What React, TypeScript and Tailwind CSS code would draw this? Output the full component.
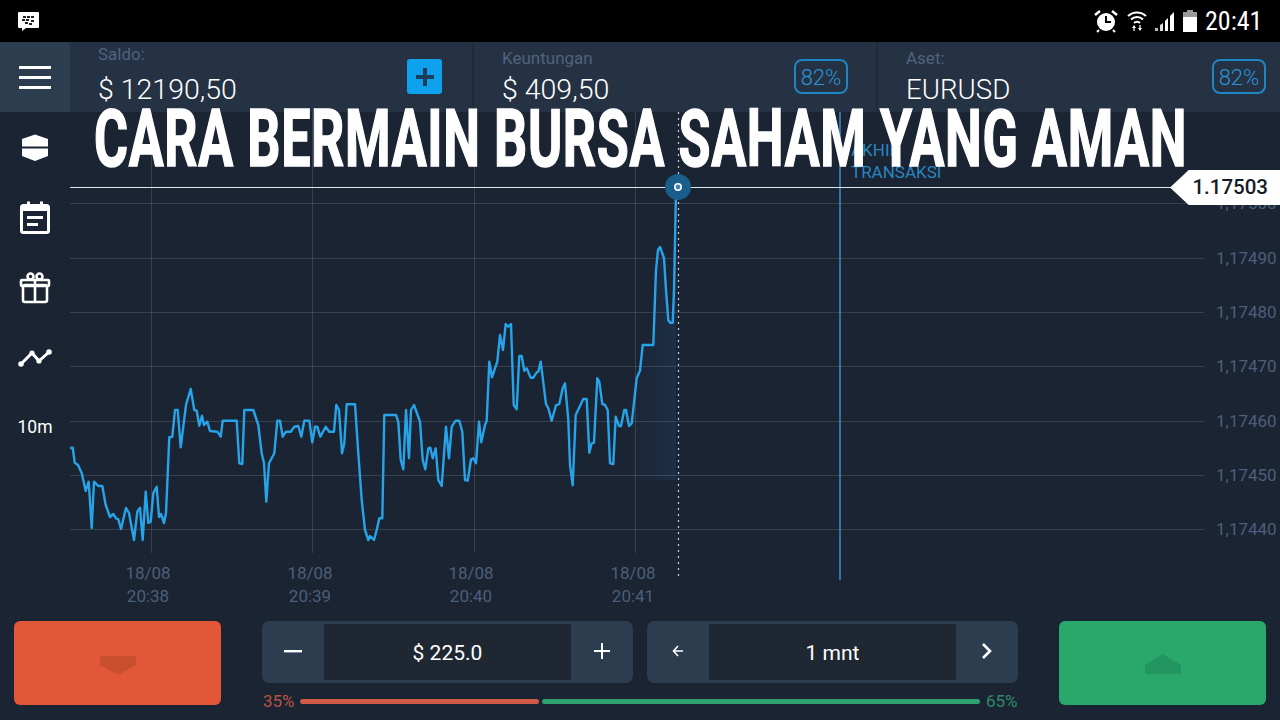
const pts = "70,448 72.7,447.7 74.7,462.7 78,465 81.7,473 85.7,491 88.7,481.7 91.7,528 94,481.7 98.3,486 102.3,486 105.7,505 110,517 113.3,514 116,518.3 118.3,519.3 121,529 126,508 129,513 134,540 137.3,511.7 140,507.7 142.7,540 145.7,491.7 148.3,523 150.7,521.7 153.3,493 156.7,486.7 159,517 161,514 164,523 166,513 169.3,437.3 172.3,436.7 175,410 177.7,410 180.7,447.3 186,405 190.7,389 194.3,410 196.7,410.7 199.3,425.7 202,415.7 204,425 207.3,421.7 210,431 217.3,431.7 220.7,436.7 222.7,420.7 236.7,420.7 239.3,463.3 242.3,464 244.3,410 253.3,410 258.3,425 261.7,453.3 264,463.3 266.3,501.7 269,463.3 274.3,453.3 277.3,420.7 280,420.7 282.7,436.7 286,431.7 290.7,431.7 294.3,426.7 298.3,426 301.3,436.7 304.3,420.7 309.3,420.7 312.3,442.3 315,426.7 317.3,426.7 320.3,436.7 325.7,426.7 329.3,431.7 334,431.7 336.3,405 339,410 342,453.3 344.3,443.3 346.7,404.3 355,404.3 358.3,453.3 361.7,500 365,530 368.3,540 370,536 374,540 376.7,530 379.3,518.3 382.3,518.3 384.3,415 396,415 398.3,421.7 400.7,460 403.3,469.3 406,410 409,458.3 411,410 414,405 420,421.7 422.7,460 425.3,469.3 428.3,448.3 430.3,447.7 432.7,458.3 435.7,448.3 438.3,480 441.7,486 446,426.7 449,458.3 451.7,426.7 455.7,420.7 459.3,420.7 462.3,431.7 465,480 467.7,480.7 471,459.3 473.3,458.3 476,463.3 479,421.7 481.3,442.3 485,425 486.7,420.7 489.3,361.7 492,377.3 497.3,361.7 500,335 503,350 505.7,324 508.3,326.7 511,324 513.7,405 516.7,409.3 519.3,356 521.7,356 524.3,370.7 526.7,368.3 530.7,377.7 533.3,377.7 536.7,372.3 538.3,371.7 540.7,361.7 546,404 548.3,408.3 551.7,420.7 556,405.3 559.3,404 562.7,388.3 565,383.3 568.3,420 570,465 572.7,485.3 575.7,415 583.3,399 586.7,399 589.3,452.7 591.7,443.3 594,442.7 597.3,378.3 599.3,381.7 602.3,404 605,405 607.7,410 610,463.3 613.3,464 615.7,416.7 619,426 621,426 624.3,410 626,410 629,426 631.7,423.3 636.7,378.3 640,370.7 642.7,345 653.3,345 656,270 658,250 660,247 664,258 666,290 668.3,320 670,322.7 672.7,322.7 674,290 676,190";

const rows = [
  { y: 258, t: "1,17490" }, { y: 312, t: "1,17480" }, { y: 366, t: "1,17470" },
  { y: 421, t: "1,17460" }, { y: 475, t: "1,17450" }, { y: 529, t: "1,17440" },
];
const times = [
  { x: 148, t: "20:38" }, { x: 310, t: "20:39" }, { x: 471, t: "20:40" }, { x: 633, t: "20:41" },
];

function StatusBar() {
  return (
    <div className="h-[42px] bg-black flex items-center justify-between pl-[18px] pr-[20px] shrink-0">
      <svg width="21" height="19" viewBox="0 0 21 19">
        <path d="M1 0h19a1 1 0 0 1 1 1v14a1 1 0 0 1-1 1H8l-4 3v-3H1a1 1 0 0 1-1-1V1a1 1 0 0 1 1-1z" fill="#fff" />
        <g fill="#222">
          <rect x="5" y="4" width="3" height="2" /><rect x="9" y="4" width="3" height="2" /><rect x="13" y="4" width="3" height="2" />
          <rect x="4" y="7" width="3" height="2" /><rect x="8" y="7" width="3" height="2" /><rect x="13" y="8" width="3" height="2" />
          <rect x="7" y="10" width="3" height="2" /><rect x="11" y="11" width="3" height="2" />
        </g>
      </svg>
      <div className="flex items-center">
        <svg width="24" height="24" viewBox="0 0 24 24" className="mr-[9px]">
          <circle cx="12" cy="13" r="9" fill="#fff" />
          <path d="M12 7v6h5" fill="none" stroke="#000" strokeWidth="2" />
          <path d="M1 6l5-4M23 6l-5-4" stroke="#fff" strokeWidth="2.5" fill="none" />
          <path d="M5 21l-2 2M19 21l2 2" stroke="#fff" strokeWidth="2" />
        </svg>
        <svg width="20" height="22" viewBox="0 0 20 22" className="mr-[7px]">
          <g fill="none" stroke="#fff" strokeWidth="2">
            <path d="M1 6a13 13 0 0 1 18 0" />
            <path d="M4 9.5a8.5 8.5 0 0 1 12 0" />
            <path d="M7 13a4 4 0 0 1 6 0" />
          </g>
          <path d="M7 15l-2 3h1.4v3h1.2v-3H9zM13 21l2-3h-1.4v-3h-1.2v3H11z" fill="#fff" />
        </svg>
        <svg width="22" height="22" viewBox="0 0 22 22" className="mr-[7px]">
          <rect x="1" y="18" width="3" height="3" fill="#bbb" />
          <path d="M6 21v-6l3-2v8z" fill="#ddd" />
          <path d="M11 21V11l3-3v13z" fill="#fff" />
          <path d="M16 21V6l4-4v19z" fill="#fff" />
        </svg>
        <svg width="14" height="22" viewBox="0 0 14 22" className="mr-[8px]">
          <rect x="4" y="0" width="6" height="3" fill="#999" />
          <rect x="0" y="2" width="14" height="5" fill="#999" />
          <rect x="0" y="7" width="14" height="15" fill="#fff" />
        </svg>
        <span className="text-[26px] leading-none text-white inline-block w-[55px] whitespace-nowrap [font-stretch:75%]">20:41</span>
      </div>
    </div>
  );
}

function Badge() {
  return (
    <div className="w-[54px] h-[35px] rounded-[8px] border-2 border-[#1f85c4] text-[#2b95d6] text-[22px] font-light flex items-center justify-center pt-[1px] -mt-[1px]">
      82%
    </div>
  );
}

function Header() {
  return (
    <div className="h-[70px] flex gap-[2px] bg-[#1f2a3a] shrink-0">
      <div className="w-[402px] bg-[#253244] flex items-center justify-between pl-[28px] pr-[30px]">
        <div className="h-full">
          <div className="text-[17px] leading-[19px] text-[#4f627e] mt-[3px]">Saldo:</div>
          <div className="text-[28.5px] leading-[32px] text-white font-light mt-[10px]">$ 12190,50</div>
        </div>
        <div className="w-[35px] h-[35px] rounded-[3px] bg-[#0ea2ee] flex items-center justify-center -mt-[1px]">
          <svg width="20" height="20" viewBox="0 0 20 20"><path d="M10 1v18M1 10h18" stroke="#1d3d5c" strokeWidth="4" /></svg>
        </div>
      </div>
      <div className="w-[402px] bg-[#253244] flex items-center justify-between pl-[28px] pr-[28px]">
        <div className="h-full">
          <div className="text-[17px] leading-[19px] text-[#4f627e] mt-[7px]">Keuntungan</div>
          <div className="text-[28.5px] leading-[32px] text-white font-light mt-[6px]">$ 409,50</div>
        </div>
        <Badge />
      </div>
      <div className="w-[402px] bg-[#253244] flex items-center justify-between pl-[28px] pr-[14px]">
        <div className="h-full">
          <div className="text-[17px] leading-[19px] text-[#4f627e] mt-[7px]">Aset:</div>
          <div className="text-[27.7px] leading-[32px] text-white font-light mt-[6px]">EURUSD</div>
        </div>
        <Badge />
      </div>
    </div>
  );
}

function Sidebar() {
  const cell = "h-[70px] flex items-center justify-center";
  return (
    <div className="w-[70px] shrink-0 flex flex-col">
      <div className="h-[70px] bg-[#2d3d50] flex flex-col items-center justify-center gap-[7px]">
        <div className="w-[32px] h-[3px] bg-white" />
        <div className="w-[32px] h-[3px] bg-white" />
        <div className="w-[32px] h-[3px] bg-white" />
      </div>
      <div className="h-px" />
      <div className={cell}>
        <svg width="28" height="28" viewBox="0 0 28 28">
          <path d="M14 0.5L27 5v7.5H1V5zM1 14.5h26V22l-13 5L1 22z" fill="#fff" />
        </svg>
      </div>
      <div className={cell}>
        <svg width="32" height="34" viewBox="0 0 32 34">
          <rect x="2.5" y="4.5" width="27" height="27" rx="2" fill="none" stroke="#fff" strokeWidth="3" />
          <path d="M2 5h28v5H2z" fill="#fff" />
          <rect x="8" y="0.5" width="3" height="6" fill="#fff" /><rect x="21" y="0.5" width="3" height="6" fill="#fff" />
          <rect x="8" y="15" width="16" height="3" fill="#fff" /><rect x="8" y="22" width="11" height="3" fill="#fff" />
        </svg>
      </div>
      <div className={cell}>
        <svg width="32" height="32" viewBox="0 0 32 32">
          <g fill="none" stroke="#fff" strokeWidth="2.6">
            <rect x="2" y="8" width="28" height="6" rx="1" />
            <rect x="4" y="13" width="24" height="17" rx="2" />
            <path d="M16 8v22" />
            <circle cx="11.5" cy="4.5" r="3" />
            <circle cx="20.5" cy="4.5" r="3" />
          </g>
        </svg>
      </div>
      <div className={cell}>
        <svg width="34" height="18" viewBox="0 0 34 18">
          <path d="M3 15L14 4l7 8L31 3" fill="none" stroke="#fff" strokeWidth="3" strokeLinejoin="round" />
          <circle cx="3" cy="15" r="2.8" fill="#fff" /><circle cx="14" cy="4" r="2.6" fill="#fff" />
          <circle cx="21" cy="12" r="2.6" fill="#fff" /><circle cx="31" cy="3" r="2.8" fill="#fff" />
        </svg>
      </div>
      <div className={`${cell} text-[17.5px] text-white pb-[2px]`}>10m</div>
    </div>
  );
}

function Chart() {
  return (
    <div className="relative flex-1 overflow-hidden">
      <svg className="absolute inset-0" width="1210" height="498" viewBox="70 112 1210 498">
        <defs>
          <linearGradient id="fade" x1="0" y1="0" x2="1" y2="0">
            <stop offset="0" stopColor="#1e3a5c" stopOpacity="0" />
            <stop offset="1" stopColor="#1e3a5c" stopOpacity="0.45" />
          </linearGradient>
        </defs>
        <path d="M620 426L636.7 378.3L640 370.7L642.7 345L653.3 345L656 270L660 247L664 258L668.3 320L672.7 322.7L676 190V480H620z" fill="url(#fade)" />
        <g stroke="#ffffff" strokeOpacity="0.13" strokeWidth="1">
          {[203.5, 258.5, 312.5, 366.5, 421.5, 475.5, 529.5].map((y) => <line key={y} x1="70" x2="1204" y1={y} y2={y} />)}
          {[151.5, 312.5, 474.5, 635.5].map((x) => <line key={x} x1={x} x2={x} y1="112" y2="553" />)}
        </g>
        <line x1="678.5" x2="678.5" y1="112" y2="576" stroke="#c8d2dc" strokeWidth="1.2" strokeDasharray="2 4" />
        <line x1="840" x2="840" y1="112" y2="580" stroke="#3f8ec8" strokeWidth="1.5" />
        <line x1="70" x2="1176" y1="187.5" y2="187.5" stroke="#dfe6ec" strokeWidth="1" />
        <polyline points={pts} fill="none" stroke="#27a3ea" strokeWidth="2.4" strokeLinejoin="round" />
        <circle cx="678" cy="187" r="13" fill="#1a5f8c" />
        <circle cx="678" cy="187" r="3.2" fill="#3f86b0" stroke="#fff" strokeWidth="1.6" />
      </svg>

      <div className="absolute left-[781px] top-[27px] text-[17px] leading-[22px] text-[#2a85c0]">
        <div>AKHIR</div>
        <div>TRANSAKSI</div>
      </div>

      <span className="absolute left-[1146px] top-[82px] text-[17px] leading-[19px] text-[#4c5f7b]">1,17500</span>
      {rows.map((r) => (
        <span key={r.y} style={{ top: r.y - 112 - 9 }} className="absolute left-[1146px] text-[17px] leading-[19px] text-[#4c5f7b]">{r.t}</span>
      ))}
      {times.map((t) => (
        <div key={t.t} style={{ left: t.x - 70 - 40 }} className="absolute top-[450px] w-[80px] text-center text-[17px] leading-[23px] text-[#4c5f7b]">
          <div>18/08</div>
          <div>{t.t}</div>
        </div>
      ))}

      <div className="absolute left-[1100px] top-[58px] w-[110px] h-[35px] bg-white flex items-center justify-end pr-[12px] text-[20.5px] font-medium text-[#141c28] [clip-path:polygon(0_50%,17%_0,100%_0,100%_100%,17%_100%)]">
        1.17503
      </div>
    </div>
  );
}

function Stepper({ left, right, value }: { left: React.ReactNode; right: React.ReactNode; value: string }) {
  return (
    <div className="w-[371px] h-[62px] rounded-[7px] bg-[#2d3d50] flex items-stretch py-[3px]">
      <div className="w-[62px] flex items-center justify-center -mt-[2px]">{left}</div>
      <div className="flex-1 bg-[#1f2733] flex items-center justify-center text-[21px] text-white pt-[3px]">{value}</div>
      <div className="w-[62px] flex items-center justify-center -mt-[2px]">{right}</div>
    </div>
  );
}

function Controls() {
  return (
    <div className="h-[110px] shrink-0 flex justify-between px-[14px] pt-[11px]">
      <div className="w-[207px] h-[84px] rounded-[6px] bg-[#e25737] flex items-center justify-center">
        <svg width="36" height="19" viewBox="0 0 36 19" className="mt-[4px]"><path d="M0 0h36v9L18 19 0 9z" fill="#c9502f" /></svg>
      </div>
      <div className="w-[756px]">
        <div className="flex justify-between">
          <Stepper
            value="$ 225.0"
            left={<svg width="18" height="3" viewBox="0 0 18 3"><rect width="18" height="2.4" fill="#fff" /></svg>}
            right={<svg width="18" height="18" viewBox="0 0 18 18"><path d="M9 1v16M1 9h16" stroke="#fff" strokeWidth="2" /></svg>}
          />
          <Stepper
            value="1 mnt"
            left={<svg width="12" height="12" viewBox="0 0 12 12"><path d="M6 1L1.5 6 6 11M1.5 6H11" fill="none" stroke="#fff" strokeWidth="1.6" /></svg>}
            right={<svg width="12" height="18" viewBox="0 0 12 18"><path d="M2 2l7 7-7 7" fill="none" stroke="#fff" strokeWidth="2.6" /></svg>}
          />
        </div>
        <div className="flex items-center mt-[8px] text-[17px] leading-[20px]">
          <span className="w-[38px] text-[#b9533f] shrink-0 pl-[1px]">35%</span>
          <div className="w-[239px] h-[5px] rounded-full bg-[#cf5a45]" />
          <div className="w-[438px] h-[5px] rounded-full bg-[#2fa070] ml-[3px]" />
          <span className="ml-[6px] text-[#2f8a68]">65%</span>
        </div>
      </div>
      <div className="w-[207px] h-[84px] rounded-[6px] bg-[#2aa86c] flex items-center justify-center">
        <svg width="36" height="20" viewBox="0 0 36 20" className="mt-[1px]"><path d="M18 0l18 11v9H0v-9z" fill="#23965f" /></svg>
      </div>
    </div>
  );
}

export default function App() {
  return (
    <div className="relative w-[1280px] h-[720px] overflow-hidden bg-[#1b2432] flex flex-col font-['Roboto',sans-serif]">
      <StatusBar />
      <div className="flex flex-1 min-h-0">
        <Sidebar />
        <div className="flex-1 flex flex-col min-w-0">
          <Header />
          <Chart />
        </div>
      </div>
      <Controls />
      <div className="absolute left-[94px] top-[94px] font-bold text-[79px] leading-[90px] text-white whitespace-nowrap origin-left scale-x-[0.658] [-webkit-text-stroke:1.5px_white] tracking-[1px]">
        CARA BERMAIN BURSA SAHAM YANG AMAN
      </div>
    </div>
  );
}
